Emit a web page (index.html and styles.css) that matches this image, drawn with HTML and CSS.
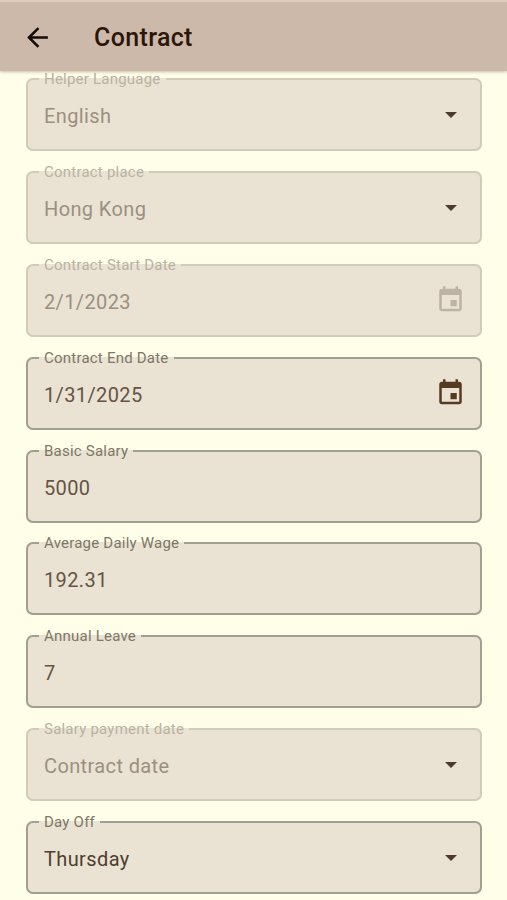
FILE: index.html
```
<!DOCTYPE html>
<html lang="en">

<head>
    <meta charset="UTF-8">
    <title>Contract</title>
    <link rel="stylesheet" href="styles.css">
</head>

<body>
    <header class="topbar">
        <svg class="back" viewBox="0 0 24 24"><path d="M20 11H7.83l5.59-5.59L12 4l-8 8 8 8 1.41-1.41L7.83 13H20z"/></svg>
        <h1 class="title">Contract</h1>
    </header>

    <main class="form">
        <fieldset class="field disabled">
            <legend>Helper Language</legend>
            <span class="value">English</span>
            <svg class="arrow" viewBox="0 0 12 6"><path d="M0 0h12L6 6z"/></svg>
        </fieldset>
        <fieldset class="field disabled">
            <legend>Contract place</legend>
            <span class="value">Hong Kong</span>
            <svg class="arrow" viewBox="0 0 12 6"><path d="M0 0h12L6 6z"/></svg>
        </fieldset>
        <fieldset class="field disabled">
            <legend>Contract Start Date</legend>
            <span class="value">2/1/2023</span>
            <svg class="calendar" viewBox="0 0 24 24"><path d="M17 12h-5v5h5v-5zM16 1v2H8V1H6v2H5c-1.11 0-1.99.9-1.99 2L3 19c0 1.1.89 2 2 2h14c1.1 0 2-.9 2-2V5c0-1.1-.9-2-2-2h-1V1h-2zm3 18H5V8h14v11z"/></svg>
        </fieldset>
        <fieldset class="field">
            <legend>Contract End Date</legend>
            <span class="value">1/31/2025</span>
            <svg class="calendar" viewBox="0 0 24 24"><path d="M17 12h-5v5h5v-5zM16 1v2H8V1H6v2H5c-1.11 0-1.99.9-1.99 2L3 19c0 1.1.89 2 2 2h14c1.1 0 2-.9 2-2V5c0-1.1-.9-2-2-2h-1V1h-2zm3 18H5V8h14v11z"/></svg>
        </fieldset>
        <fieldset class="field">
            <legend>Basic Salary</legend>
            <span class="value">5000</span>
        </fieldset>
        <fieldset class="field">
            <legend>Average Daily Wage</legend>
            <span class="value">192.31</span>
        </fieldset>
        <fieldset class="field">
            <legend>Annual Leave</legend>
            <span class="value">7</span>
        </fieldset>
        <fieldset class="field disabled">
            <legend>Salary payment date</legend>
            <span class="value">Contract date</span>
            <svg class="arrow" viewBox="0 0 12 6"><path d="M0 0h12L6 6z"/></svg>
        </fieldset>
        <fieldset class="field">
            <legend>Day Off</legend>
            <span class="value dark">Thursday</span>
            <svg class="arrow" viewBox="0 0 12 6"><path d="M0 0h12L6 6z"/></svg>
        </fieldset>
    </main>
</body>

</html>
```
FILE: styles.css
```
* {
    margin: 0;
    padding: 0;
    box-sizing: border-box;
}

body {
    height: 900px;
    overflow: hidden;
    background: #fffee9;
    font-family: Roboto, sans-serif;
}

.topbar {
    position: relative;
    display: flex;
    align-items: center;
    height: 71px;
    padding: 2px 22px 0;
    border-top: 2px solid #dfcbbb;
    background: #cdb9aa;
    box-shadow: 0 1px 3px rgba(90, 70, 50, 0.35);
}

.back {
    width: 31px;
    height: 31px;
    fill: #130b05;
}

.title {
    margin-left: 41px;
    color: #2b1708;
    font-size: 25px;
    font-weight: 500;
    letter-spacing: 0.35px;
}

.form {
    padding: 0 25.5px 0 26px;
}

.field {
    display: flex;
    align-items: center;
    justify-content: space-between;
    height: 80px;
    margin-bottom: 12.9px;
    padding: 0 16px 4px;
    border: 2px solid #a19f90;
    border-radius: 7px;
    background: #eae3d4;
}

.field legend {
    height: 16px;
    margin-left: -5px;
    padding: 0 5px;
    color: #7d7766;
    font-size: 15px;
    line-height: 17px;
    letter-spacing: 0.22px;
}

.value {
    color: #665444;
    font-size: 20px;
    letter-spacing: 0.38px;
}

.value.dark {
    color: #4f3d2d;
}

.arrow {
    width: 12px;
    height: 6px;
    margin: 0 7px 2px 0;
    fill: #4c3a2a;
}

.calendar {
    width: 31px;
    height: 30px;
    margin: 0 -2px 4px 0;
    fill: #573a22;
}

.disabled {
    border-color: #d0ccba;
}

.disabled legend {
    color: #b9b2a2;
}

.disabled .value {
    color: #9c8f80;
}

.disabled .calendar {
    fill: #bdb3a4;
}
```
